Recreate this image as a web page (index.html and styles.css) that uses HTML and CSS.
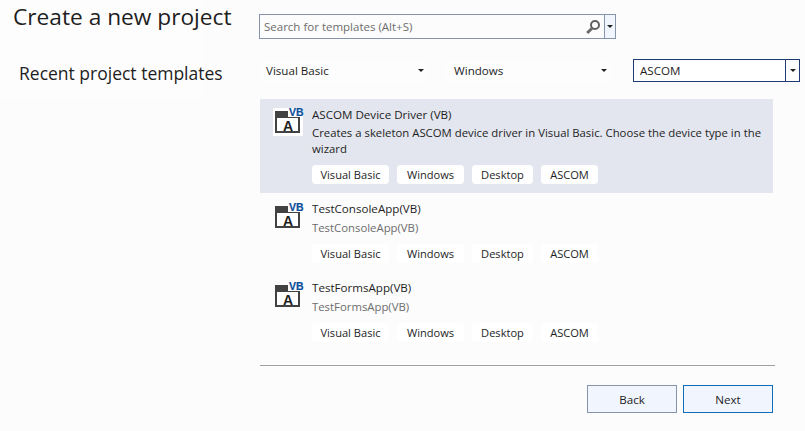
FILE: index.html
```html
<!DOCTYPE html>
<html lang="en">
<head>
<meta charset="utf-8">
<title>Create a new project</title>
<link rel="stylesheet" href="styles.css">
</head>
<body>
<div class="page">
  <aside class="side">
    <div class="side-head">
      <h1 class="title">Create a new project</h1>
      <div class="recent">Recent project templates</div>
    </div>
  </aside>
  <main class="main">
    <div class="search">
      <span class="search-input">Search for templates (Alt+S)</span>
      <svg class="mag" width="16" height="16" viewBox="0 0 16 16"><circle cx="10" cy="6" r="4" fill="none" stroke="#5f5f5f" stroke-width="2"/><path d="M7 9.2 2.2 14" stroke="#6b6b6b" stroke-width="3" fill="none"/></svg>
      <span class="search-drop"><i class="arrow"></i></span>
    </div>
    <div class="filters">
      <div class="filter f1"><span>Visual Basic</span><i class="arrow"></i></div>
      <div class="filter f2"><span>Windows</span><i class="arrow"></i></div>
      <div class="filter f3"><span>ASCOM</span><span class="f3-drop"><i class="arrow"></i></span></div>
    </div>
    <div class="list">
      <div class="item selected">
        <svg class="icon" width="30" height="28" viewBox="0 0 30 28"><path d="M0 0h30v28H0z" fill="#fff"/><path d="M2 3h13v6h12v16H2z" fill="#424242"/><path d="M4 10h21v13H4z" fill="#fff"/><text x="16" y="8" class="vb">VB</text><text x="15" y="23" class="a" text-anchor="middle">A</text></svg>
        <div class="body">
          <div class="name">ASCOM Device Driver (VB)</div>
          <div class="desc dark">Creates a skeleton ASCOM device driver in Visual Basic. Choose the device type in the wizard</div>
          <div class="tags"><span class="tag">Visual Basic</span><span class="tag">Windows</span><span class="tag">Desktop</span><span class="tag">ASCOM</span></div>
        </div>
      </div>
      <div class="item">
        <svg class="icon" width="30" height="28" viewBox="0 0 30 28"><path d="M2 3h13v6h12v16H2z" fill="#424242"/><path d="M4 10h21v13H4z" fill="#fff"/><text x="16" y="8" class="vb">VB</text><text x="15" y="23" class="a" text-anchor="middle">A</text></svg>
        <div class="body">
          <div class="name">TestConsoleApp(VB)</div>
          <div class="desc">TestConsoleApp(VB)</div>
          <div class="tags"><span class="tag">Visual Basic</span><span class="tag">Windows</span><span class="tag">Desktop</span><span class="tag">ASCOM</span></div>
        </div>
      </div>
      <div class="item">
        <svg class="icon" width="30" height="28" viewBox="0 0 30 28"><path d="M2 3h13v6h12v16H2z" fill="#424242"/><path d="M4 10h21v13H4z" fill="#fff"/><text x="16" y="8" class="vb">VB</text><text x="15" y="23" class="a" text-anchor="middle">A</text></svg>
        <div class="body">
          <div class="name">TestFormsApp(VB)</div>
          <div class="desc">TestFormsApp(VB)</div>
          <div class="tags"><span class="tag">Visual Basic</span><span class="tag">Windows</span><span class="tag">Desktop</span><span class="tag">ASCOM</span></div>
        </div>
      </div>
    </div>
    <div class="rule"></div>
    <div class="actions">
      <button class="btn">Back</button>
      <button class="btn primary">Next</button>
    </div>
  </main>
</div>
</body>
</html>
```
FILE: styles.css
```css
* { box-sizing: border-box; }
html, body { margin: 0; height: 100%; }
body {
  background: #fcfcfc;
  color: #1e1e1e;
  font-family: "Open Sans", "Noto Sans", sans-serif;
  font-size: 12px;
  overflow: hidden;
}
.page { display: flex; width: 805px; height: 431px; }
.side { width: 259px; flex: none; }
.side-head { width: 205px; height: 98px; background: #fdfdfd; padding-top: 1px; }
.title {
  margin: 0 0 0 13px;
  font-size: 22.7px;
  font-weight: 400;
  line-height: 31px;
  color: #1e1e1e;
  white-space: nowrap;
}
.recent {
  margin: 28px 0 0 19px;
  font-size: 17.5px;
  line-height: 26px;
  white-space: nowrap;
}
.main { flex: 1; min-width: 0; padding-top: 14px; }
.search {
  width: 357px;
  height: 25px;
  display: flex;
  align-items: center;
  border: 1px solid #8594ab;
  background: #fcfcfc;
}
.search-input { flex: 1; padding-left: 4px; color: #6d6d6d; font-size: 11.5px; white-space: nowrap; }
.mag { flex: none; margin-right: 3px; }
.search-drop {
  flex: none;
  width: 11px;
  height: 100%;
  display: flex;
  align-items: center;
  justify-content: center;
  border-left: 1px solid #8594ab;
  background: #f1f5fd;
}
.arrow {
  display: block;
  width: 0;
  height: 0;
  border-left: 3px solid transparent;
  border-right: 3px solid transparent;
  border-top: 3px solid #222;
}
.filters { display: flex; margin-top: 20px; height: 23px; align-items: stretch; }
.filter { display: flex; align-items: center; font-size: 11.6px; white-space: nowrap; justify-content: space-between; background: #fdfdfd; }
.f1 { width: 168px; padding: 0 3px 0 7px; margin-right: 19px; }
.f2 { width: 164px; padding: 0 3px 0 8px; margin-right: 23px; }
.f3 { width: 167px; padding-left: 6px; border: 1px solid #1d3a72; background: #fff; }
.f3-drop { width: 14px; height: 100%; display: flex; align-items: center; justify-content: center; border-left: 1px solid #1d3a72; }
.list { margin-top: 17px; width: 513px; margin-left: 1px; }
.item { display: flex; padding: 7px 10px 0 13px; height: 79px; }
.item.selected { background: #e3e6ee; height: 94px; }
.icon { flex: none; margin-right: 9px; margin-top: 3px; overflow: visible; }
.selected .icon { margin-top: 2px; }
.vb { font: 700 10.5px "Liberation Sans", sans-serif; fill: #0b4f9a; stroke: #0b4f9a; stroke-width: 0.2px; }
.a { font: 700 14px "Liberation Sans", sans-serif; fill: #1e1e1e; }
.body { flex: 1; min-width: 0; }
.name { font-size: 11.6px; line-height: 17px; }
.desc { font-size: 11.35px; line-height: 18px; margin-top: 2px; color: #6d6d6d; }
.desc.dark { color: #1e1e1e; line-height: 16px; }
.tags { display: grid; grid-template-columns: 77px 67px 61px 57px; gap: 8px; margin-top: 7px; }
.selected .tags { margin-top: 8px; }
.tag {
  background: #fff;
  border-radius: 4px;
  height: 19px;
  line-height: 19px;
  text-align: center;
  font-size: 11.1px;
  white-space: nowrap;
}
.rule { margin-top: 14px; margin-left: 1px; width: 515px; border-top: 1px solid #a0a0a0; }
.actions { display: flex; justify-content: flex-end; gap: 6px; width: 514px; margin-top: 19px; }
.btn {
  width: 90px;
  height: 28px;
  background: #f1f5fd;
  border: 1px solid #8594ab;
  font: inherit;
  font-size: 11.6px;
  color: #1e1e1e;
  padding: 0;
}
.btn.primary { border-color: #0e6cb8; }
```
